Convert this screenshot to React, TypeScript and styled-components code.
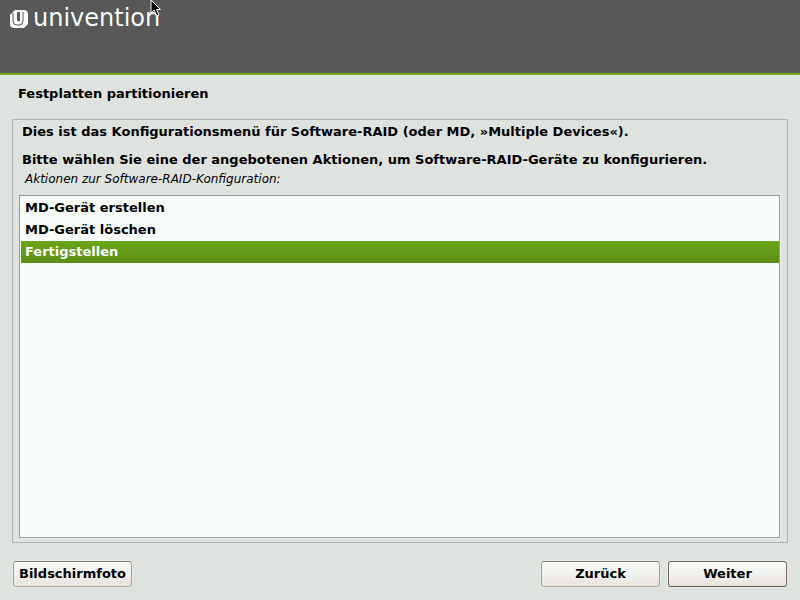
import React, { useState } from "react";
import styled, { createGlobalStyle } from "styled-components";

const GlobalStyle = createGlobalStyle`
  * { box-sizing: border-box; }
  body {
    margin: 0;
    background: #dfe3df;
    color: #000;
    font: bold 13px/16px "DejaVu Sans", Verdana, sans-serif;
  }
`;

const Page = styled.div`
  display: flex;
  flex-direction: column;
  min-height: 100vh;
`;

const Header = styled.header`
  height: 75px;
  padding: 5px 10px;
  background: #585858;
  border-bottom: 2px solid #73ab1c;
`;

const Brand = styled.div`
  display: flex;
  align-items: center;
  gap: 3px;
  color: #f6fbf7;
`;

const BrandMark = styled.svg`
  width: 20px;
  height: 20px;
  margin-top: 4px;
`;

const BrandName = styled.span`
  font-size: 24px;
  font-weight: normal;
  line-height: 26px;
`;

const Pointer = styled.svg`
  position: absolute;
  top: 0;
  left: 150px;
  width: 11px;
  height: 17px;
  pointer-events: none;
`;

const Main = styled.main`
  flex: 1;
  display: flex;
  flex-direction: column;
  padding: 11px 12px 13px;
`;

const Title = styled.h1`
  margin: 0 6px 17px;
  font-size: inherit;
  line-height: 16px;
`;

const Panel = styled.section`
  flex: 1;
  display: flex;
  flex-direction: column;
  padding: 4px 7px;
  border: 1px solid #aeb2ae;
`;

const Paragraph = styled.p`
  margin: 0 2px 12px;
`;

const Question = styled(Paragraph)`
  margin-bottom: 2px;
`;

const Caption = styled.div`
  margin: 0 5px 7px;
  font-size: 12px;
  font-weight: normal;
  font-style: italic;
  line-height: 18px;
`;

const OptionList = styled.div`
  flex: 1;
  padding: 1px 0 1px 1px;
  margin-left: -1px;
  background: #f7fcf8;
  border: 1px solid #9b9d9b;
  box-shadow: 1px 1px 0 #eeeeeb;
`;

const OptionText = styled.span`
  display: block;
  padding: 3px 4px;
`;

const OptionRadio = styled.input`
  position: absolute;
  opacity: 0;
  pointer-events: none;

  &:checked + ${OptionText} {
    color: #f7fcf8;
    background: linear-gradient(#68a718, #659a18 50%, #5c8c18);
  }
`;

const Option = styled.label`
  display: block;
  height: 22px;
`;

const Actions = styled.footer`
  display: flex;
  gap: 8px;
  margin: 18px 1px 0;
`;

const Button = styled.button<{ $primary?: boolean; $first?: boolean }>`
  width: 119px;
  height: 26px;
  margin-right: ${({ $first }) => ($first ? "auto" : "0")};
  padding: 0 4px;
  color: #000;
  font: inherit;
  background: linear-gradient(#fcfbf8, #eff2ef 45%, #efeee9 60%, #e8e3db);
  border: 1px solid;
  border-color: ${({ $primary }) =>
    $primary ? "#655c50 #756a62 #655c58" : "#867e70 #a99e93 #b5aa9f"};
  border-radius: 3px;
  box-shadow: 0 0 0 1px #e8e9e5;
`;

const actions = ["MD-Gerät erstellen", "MD-Gerät löschen", "Fertigstellen"];

export default function App() {
  const [selected, setSelected] = useState("Fertigstellen");

  return (
    <Page>
      <GlobalStyle />
      <Header>
        <Brand>
          <BrandMark viewBox="0 0 20 20" aria-hidden="true">
            <path
              fill="currentColor"
              d="M5 0H14Q18 0 18 4V14L14 18H4Q0 18 0 14V5Z"
            />
            <path
              fill="none"
              stroke="#585858"
              strokeLinejoin="round"
              d="M3 3V11Q3 15 7 15H9Q13 15 13 11V2"
            />
            <path fill="#585858" d="M7 2H10V11H8Q7 11 7 10Z" />
          </BrandMark>
          <BrandName>univention</BrandName>
        </Brand>
        <Pointer viewBox="0 0 11 17" aria-hidden="true">
          <path
            d="M1 0V13L4 10L7 16L9 15L6.500 9.500H10.500Z"
            fill="#000"
            stroke="#fff"
            strokeWidth="1"
          />
        </Pointer>
      </Header>
      <Main>
        <Title>Festplatten partitionieren</Title>
        <Panel>
          <Paragraph>
            Dies ist das Konfigurationsmenü für Software-RAID (oder MD, »Multiple Devices«).
          </Paragraph>
          <Question>
            Bitte wählen Sie eine der angebotenen Aktionen, um Software-RAID-Geräte zu konfigurieren.
          </Question>
          <Caption id="actions-caption">Aktionen zur Software-RAID-Konfiguration:</Caption>
          <OptionList role="radiogroup" aria-labelledby="actions-caption">
            {actions.map((action) => (
              <Option key={action}>
                <OptionRadio
                  type="radio"
                  name="action"
                  value={action}
                  checked={selected === action}
                  onChange={() => setSelected(action)}
                />
                <OptionText>{action}</OptionText>
              </Option>
            ))}
          </OptionList>
        </Panel>
        <Actions>
          <Button type="button" $first>Bildschirmfoto</Button>
          <Button type="button">Zurück</Button>
          <Button type="button" $primary>Weiter</Button>
        </Actions>
      </Main>
    </Page>
  );
}
